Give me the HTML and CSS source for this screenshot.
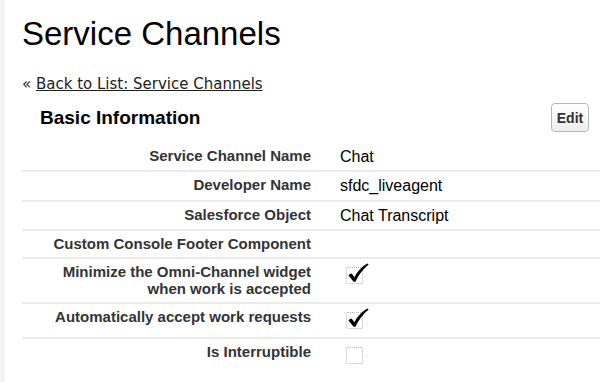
FILE: index.html
```html
<!DOCTYPE html>
<html lang="en">
<head>
<meta charset="utf-8">
<title>Service Channels</title>
<link rel="stylesheet" href="styles.css">
</head>
<body>
<div class="strip"></div>
<main class="main">
  <h1 class="title">Service Channels</h1>
  <div class="back">« <a href="#" class="back-link">Back to List: Service Channels</a></div>
  <div class="section-head">
    <h2 class="section-title">Basic Information</h2>
    <button class="btn" type="button">Edit</button>
  </div>
  <div class="detail">
    <div class="row">
      <div class="label">Service Channel Name</div>
      <div class="value">Chat</div>
    </div>
    <div class="row">
      <div class="label">Developer Name</div>
      <div class="value">sfdc_liveagent</div>
    </div>
    <div class="row">
      <div class="label">Salesforce Object</div>
      <div class="value">Chat Transcript</div>
    </div>
    <div class="row">
      <div class="label">Custom Console Footer Component</div>
      <div class="value"></div>
    </div>
    <div class="row">
      <div class="label">Minimize the Omni-Channel widget<br>when work is accepted</div>
      <div class="value"><span class="cb checked"><svg class="check" width="23" height="21" viewBox="0 0 23 21"><path d="M1.5 12.5 C2.5 11.3 3.6 10.6 4.6 10.6 L7.4 14.2 C10.2 9 14.2 4 20.6 0.6 L21.6 1.6 C16 6.2 11.2 12.4 8.5 18.8 L6.6 18.8 Z" fill="#000"/></svg></span></div>
    </div>
    <div class="row">
      <div class="label">Automatically accept work requests</div>
      <div class="value"><span class="cb checked"><svg class="check" width="23" height="21" viewBox="0 0 23 21"><path d="M1.5 12.5 C2.5 11.3 3.6 10.6 4.6 10.6 L7.4 14.2 C10.2 9 14.2 4 20.6 0.6 L21.6 1.6 C16 6.2 11.2 12.4 8.5 18.8 L6.6 18.8 Z" fill="#000"/></svg></span></div>
    </div>
    <div class="row last">
      <div class="label">Is Interruptible</div>
      <div class="value"><span class="cb"></span></div>
    </div>
  </div>
</main>
</body>
</html>
```
FILE: styles.css
```css
html, body {
  margin: 0;
  padding: 0;
  background: #fff;
}
body {
  display: flex;
  min-height: 382px;
  font-family: "Liberation Sans", Arial, sans-serif;
  color: #000;
}
.strip {
  width: 5px;
  flex: none;
  background: #f3f3f6;
}
.main {
  flex: 1;
  padding: 14px 0 0 17px;
}
.title {
  margin: 0;
  font-size: 33px;
  line-height: 40px;
  font-weight: normal;
  color: #000;
}
.back {
  margin-top: 21px;
  font-family: "DejaVu Sans", Verdana, sans-serif;
  font-size: 15px;
  line-height: 18px;
  color: #222;
}
.back-link {
  color: #222;
  text-decoration: underline;
}
.section-head {
  display: flex;
  align-items: center;
  justify-content: space-between;
  padding: 10px 11px 10.5px 18px;
}
.section-title {
  margin: 0;
  font-size: 19px;
  line-height: 22px;
  font-weight: bold;
  color: #000;
}
.btn {
  box-sizing: border-box;
  width: 38px;
  height: 29px;
  padding: 0;
  border: 1px solid #b8b8b8;
  border-radius: 4px;
  background: linear-gradient(#ffffff, #eeeeee);
  font-family: "Liberation Sans", Arial, sans-serif;
  font-size: 14px;
  font-weight: bold;
  color: #333;
}
.row {
  display: grid;
  grid-template-columns: 296px 1fr;
  align-items: start;
  border-bottom: 2px solid #ebebeb;
}
.row.last {
  border-bottom: none;
}
.label {
  padding: 4px 7px 4px 0;
  text-align: right;
  font-size: 15px;
  line-height: 17.5px;
  font-weight: bold;
  color: #333338;
}
.value {
  padding: 4px 0 4px 22px;
  font-size: 16px;
  line-height: 19.5px;
  color: #000;
}
.cb {
  position: relative;
  display: block;
  box-sizing: border-box;
  width: 17px;
  height: 17px;
  margin: 4px 0 4px 6px;
  border: 1px dotted #b5b5b5;
  border-radius: 2px;
}
.check {
  position: absolute;
  left: 0;
  top: -5px;
}
```
